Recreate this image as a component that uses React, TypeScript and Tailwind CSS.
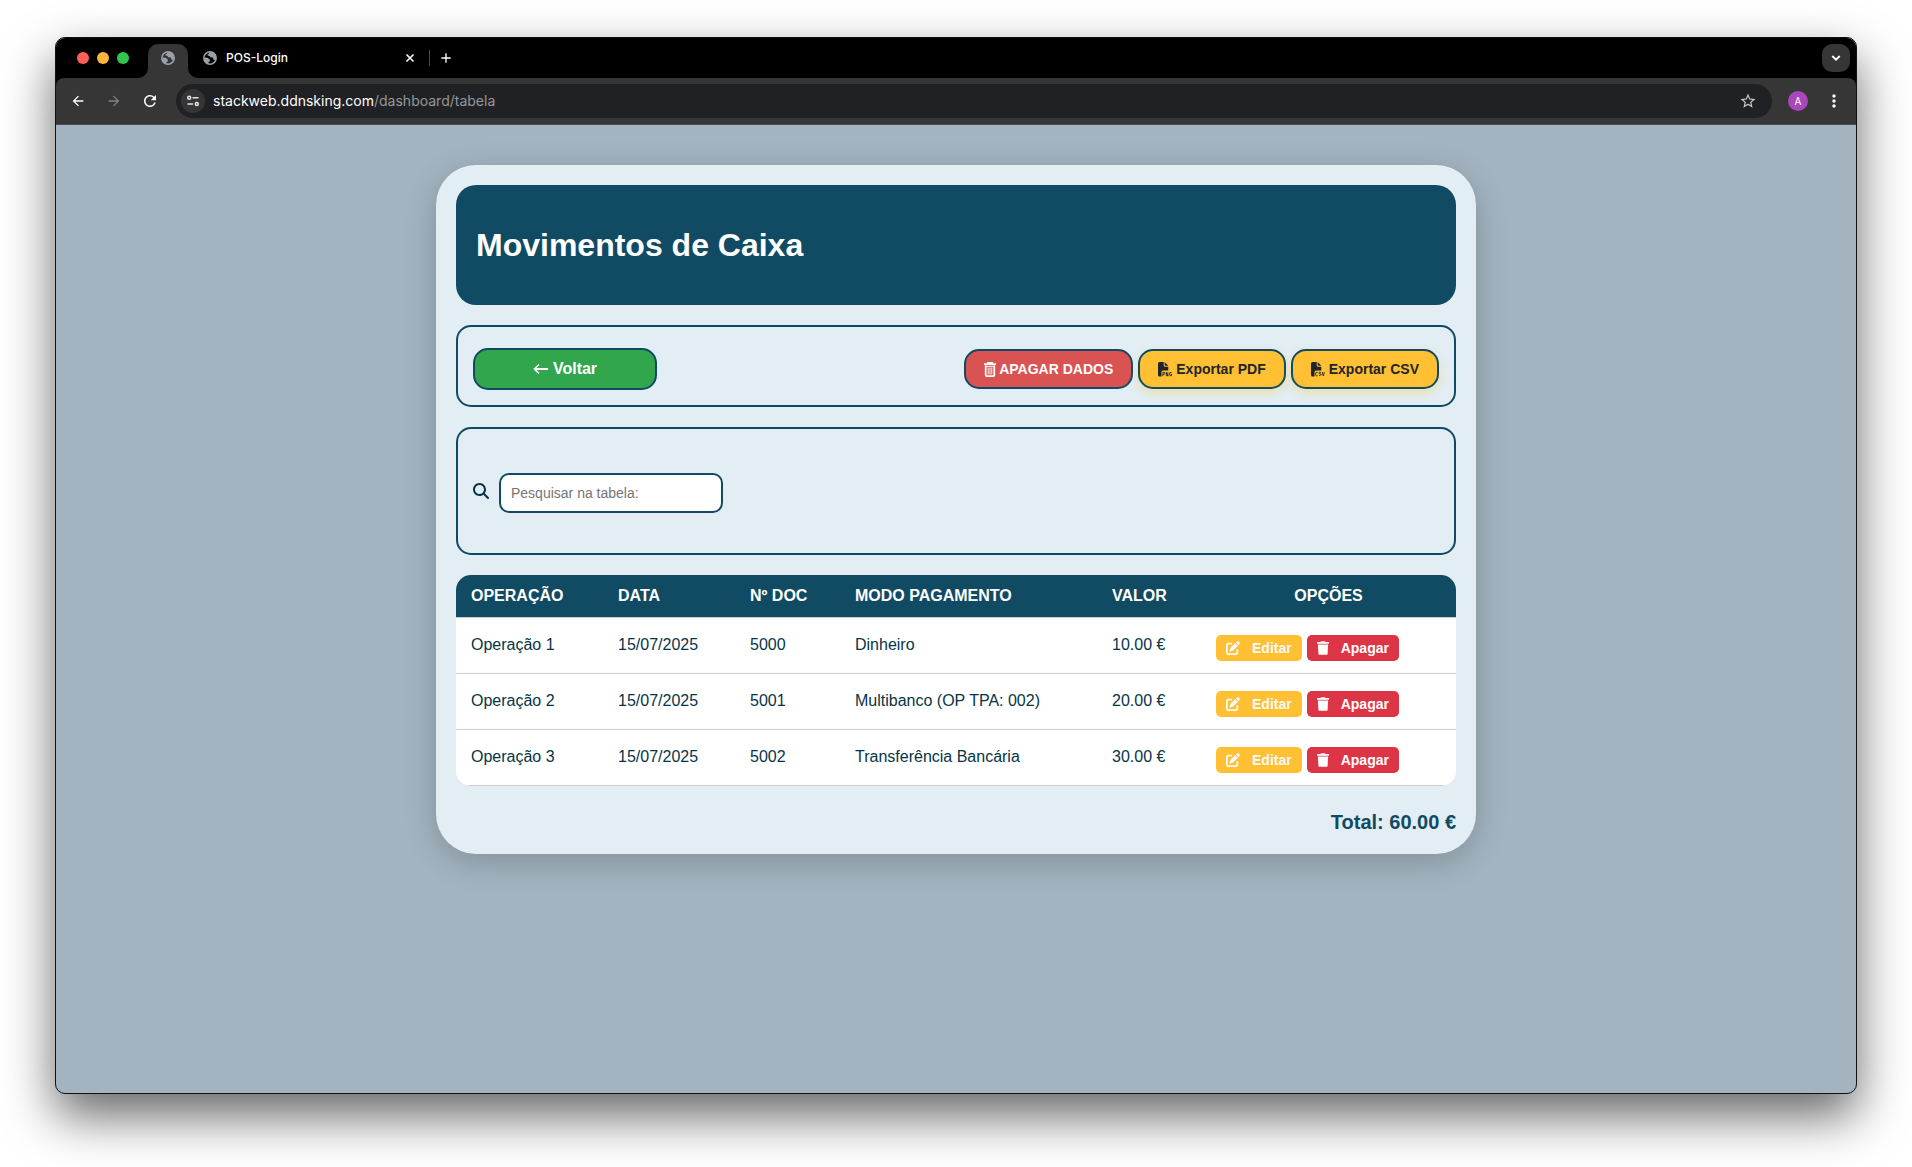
import React from "react";
import { FaTrash } from "react-icons/fa";
import { FaMagnifyingGlass, FaPenToSquare } from "react-icons/fa6";
import { BsArrowLeft } from "react-icons/bs";
import { MdArrowBack, MdArrowForward, MdRefresh, MdMoreVert, MdStarOutline, MdAdd } from "react-icons/md";

const rows = [
  { op: "Operação 1", data: "15/07/2025", doc: "5000", modo: "Dinheiro", valor: "10.00 €" },
  { op: "Operação 2", data: "15/07/2025", doc: "5001", modo: "Multibanco (OP TPA: 002)", valor: "20.00 €" },
  { op: "Operação 3", data: "15/07/2025", doc: "5002", modo: "Transferência Bancária", valor: "30.00 €" },
];

function TrashOutline() {
  return (
    <svg viewBox="0 0 12 15" className="h-[15px] w-3 shrink-0" fill="none" stroke="currentColor">
      <path d="M0 2.200h12M4 2V0.800h4V2" strokeWidth="1.800" />
      <path d="M1.700 3.500v9.500a1.200 1.200 0 0 0 1.200 1.200h6.200a1.200 1.200 0 0 0 1.200-1.200V3.500" strokeWidth="1.700" />
      <path d="M1 4.300h10" strokeWidth="1" />
      <path d="M4.200 5.500v7M6 5.500v7M7.800 5.500v7" strokeWidth="0.900" />
    </svg>
  );
}

function FileIcon({ kind }: { kind: "PNG" | "CSV" }) {
  return (
    <svg viewBox="0 0 14 16" className="h-4 w-[14px] shrink-0" fill="currentColor">
      <path d="M0 2.500A1.500 1.500 0 0 1 1.500 1H5.700v3.200A1.500 1.500 0 0 0 7.200 5.700H10.300V9.500H5A1.500 1.500 0 0 0 3.500 11V15.500h-2A1.500 1.500 0 0 1 0 14z" />
      <path d="M6.700 1l3.600 3.700H7.300a.6.6 0 0 1-.6-.6z" />
      {kind === "PNG" ? (
        <path d="M4.900 15.200v-4h.8q1.100 0 1.100 1.100t-1.100 1.100h-.8M8.300 15.200v-4l1.600 4v-4M13.500 11.700q-2-1.200-2 1.400t2 1.500v-1.400h-.7" fill="none" stroke="currentColor" strokeWidth="0.900" />
      ) : (
        <path d="M6.700 11.600q-2.100-1.300-2.100 1.500t2.100 1.500M9.900 11.500q-1.900-.9-1.900.4t1.900 1.300-1.900 1.500M11.200 11l1.100 4 1.100-4" fill="none" stroke="currentColor" strokeWidth="0.900" />
      )}
    </svg>
  );
}

function SiteControls() {
  return (
    <svg viewBox="0 0 14 12" className="h-3 w-[14px]" fill="none" stroke="#e3e3e3" strokeWidth="1.500">
      <circle cx="3.200" cy="2.800" r="1.500" />
      <path d="M6.500 2.800H12.500M1.500 9h5.500" />
      <circle cx="10.800" cy="9" r="1.500" />
    </svg>
  );
}

function Globe() {
  return (
    <svg viewBox="0 0 14 14" className="size-[14px] shrink-0" fill="none" stroke="#9aa0a9">
      <circle cx="7" cy="7" r="6.200" strokeWidth="1.500" />
      <path d="M1 6.500L4.500 6.800 6.800 8.500V10.500L5.500 11V13L2.500 12 .8 9z" fill="#9aa0a9" stroke="none" />
      <path d="M6.500 .8L6 2.500 4.500 3.200 4.600 4.600 6.500 5 7.200 6.200 9.800 6.500 10.500 8.500 12.300 9.500 13.300 7 12.500 3.500 10 1z" fill="#9aa0a9" stroke="none" />
    </svg>
  );
}

function Chrome() {
  return (
    <header className="font-[Inter,sans-serif]">
      <div className="flex h-10 items-stretch bg-black pl-[21px] pr-1.5">
        <div className="flex items-center gap-2" aria-hidden="true">
          <span className="size-3 rounded-full bg-[#ff5f57]" />
          <span className="size-3 rounded-full bg-[#ffb43f]" />
          <span className="size-3 rounded-full bg-[#32c74c]" />
        </div>
        <div className="ml-[9px] flex items-end">
          <svg viewBox="0 0 10 10" className="size-2.5" fill="#363637"><path d="M10 0v10H0A10 10 0 0 0 10 0z" /></svg>
          <button aria-label="Separador ativo" className="flex h-[34px] w-10 items-center justify-center rounded-t-[10px] bg-[#363637] pb-1.5">
            <Globe />
          </button>
          <svg viewBox="0 0 10 10" className="size-2.5" fill="#363637"><path d="M0 0v10h10A10 10 0 0 1 0 0z" /></svg>
        </div>
        <div className="ml-[5px] flex w-[214px] items-center text-white">
          <Globe />
          <span className="ml-[9px] flex-1 text-xs font-medium">POS-Login</span>
          <button aria-label="Fechar separador">
            <svg viewBox="0 0 14 14" className="size-3.5" fill="none" stroke="currentColor" strokeWidth="1.600"><path d="M3.500 3.500l7 7M10.500 3.500l-7 7" /></svg>
          </button>
        </div>
        <div className="ml-3 flex items-center">
          <span className="h-4 w-px bg-[#4a4a4c]" />
          <button aria-label="Novo separador" className="ml-2 text-white"><MdAdd className="size-4" /></button>
        </div>
        <button aria-label="Pesquisar separadores" className="ml-auto mt-1.5 flex size-7 items-center justify-center rounded-[10px] bg-[#363637] text-white">
          <svg viewBox="0 0 14 14" className="size-3.5" fill="none" stroke="currentColor" strokeWidth="1.900"><path d="M3.300 5l3.700 3.700L10.700 5" /></svg>
        </button>
      </div>
      <div className="bg-black">
        <div className="flex h-[47px] items-center rounded-t-[8px] border-b border-[#4f4a4d] bg-[#363637] pl-[14px] pr-3">
          <button aria-label="Recuar" className="text-white"><MdArrowBack className="size-4" /></button>
          <button aria-label="Avançar" className="ml-5 text-[#838384]"><MdArrowForward className="size-4" /></button>
          <button aria-label="Recarregar" className="ml-[19px] text-white"><MdRefresh className="size-[18px]" /></button>
          <div className="ml-[17px] flex h-[34px] flex-1 items-center rounded-full bg-[#202124] pl-[5px] pr-[15px]">
            <button aria-label="Informações do site" className="flex size-6 items-center justify-center rounded-full bg-[#363637]"><SiteControls /></button>
            <span className="ml-2 flex-1 text-sm text-[#96979a]"><span className="text-white">stackweb.ddnsking.com</span>/dashboard/tabela</span>
            <button aria-label="Favorito" className="text-[#c7c7c7]"><MdStarOutline className="size-[18px]" /></button>
          </div>
          <button aria-label="Perfil" className="ml-4 flex size-5 items-center justify-center rounded-full bg-[#ab47bc] text-[10px] text-white">A</button>
          <button aria-label="Menu" className="ml-4 text-white"><MdMoreVert className="size-5" /></button>
        </div>
      </div>
    </header>
  );
}

export default function App() {
  return (
    <div className="min-h-screen bg-white px-[55px] pb-[73px] pt-[37px]">
      <div className="flex min-h-[1057px] flex-col overflow-hidden rounded-[10px] border border-[#111] bg-[#a3b4c0] shadow-[0_22px_50px_rgba(0,0,0,0.6)]">
        <Chrome />
        <main className="flex-1 px-5 py-10 font-[Liberation_Sans,Arial,sans-serif] text-[#063546]">
          <div className="mx-auto max-w-[1040px] rounded-[40px] bg-[#e2edf4] p-5 shadow-[0_8px_32px_rgba(0,0,0,0.2)]">
            <div className="flex h-[120px] items-center rounded-[20px] bg-[#114b63] px-5">
              <h1 className="text-[32px] font-bold text-white">Movimentos de Caixa</h1>
            </div>

            <div className="mt-5 flex items-center justify-between rounded-[15px] border-2 border-[#114b63] px-[15px] pb-[15px] pt-[21px]">
              <button className="flex h-[42px] w-[184px] items-center justify-center gap-1 rounded-[15px] border-2 border-[#114b63] bg-[#31a64d] font-bold text-white">
                <BsArrowLeft className="size-4" stroke="currentColor" strokeWidth={1} />Voltar
              </button>
              <div className="flex gap-[5px] text-sm font-bold">
                <button className="flex h-10 items-center gap-[3px] rounded-[15px] border-2 border-[#114b63] bg-[#d95353] px-[18px] text-white"><TrashOutline />APAGAR DADOS</button>
                <button className="flex h-10 items-center gap-1 rounded-[15px] border-2 border-[#114b63] bg-[#ffc033] px-[18px] text-[#212529] shadow-[0_4px_10px_rgba(255,193,7,0.3)]"><FileIcon kind="PNG" />Exportar PDF</button>
                <button className="flex h-10 items-center gap-1 rounded-[15px] border-2 border-[#114b63] bg-[#ffc033] px-[18px] text-[#212529] shadow-[0_4px_10px_rgba(255,193,7,0.3)]"><FileIcon kind="CSV" />Exportar CSV</button>
              </div>
            </div>

            <div className="mt-5 flex h-32 items-center gap-2.5 rounded-[15px] border-2 border-[#114b63] px-[15px]">
              <label htmlFor="pesquisa" aria-label="Pesquisar na tabela"><FaMagnifyingGlass className="size-4" /></label>
              <input id="pesquisa" placeholder="Pesquisar na tabela:" className="mt-1 h-10 w-56 rounded-[10px] border-2 border-[#114b63] bg-white px-2.5 text-sm placeholder:text-[#757575]" />
            </div>

            <div className="mt-5 overflow-hidden rounded-[15px] bg-white">
              <table className="w-full table-fixed border-separate border-spacing-0 text-left">
                <colgroup>
                  <col className="w-[147px]" /><col className="w-[132px]" /><col className="w-[105px]" /><col className="w-[257px]" /><col className="w-[104px]" /><col />
                </colgroup>
                <thead className="bg-[#114b63] text-white">
                  <tr className="h-[43px] *:border-b *:border-[#ccc] *:px-[15px] *:py-0">
                    <th>OPERAÇÃO</th><th>DATA</th><th>Nº DOC</th><th>MODO PAGAMENTO</th><th>VALOR</th><th className="text-center">OPÇÕES</th>
                  </tr>
                </thead>
                <tbody>
                  {rows.map((r) => (
                    <tr key={r.doc} className="h-14 *:border-b *:border-[#ccc] *:px-[15px] *:pb-0.5">
                      <td>{r.op}</td><td>{r.data}</td><td>{r.doc}</td><td>{r.modo}</td><td>{r.valor}</td>
                      <td>
                        <div className="mt-1.5 flex gap-[5px] text-sm font-bold">
                          <button className="flex h-[26px] items-center gap-3 rounded-[5px] bg-[#ffc033] px-2.5 text-[#f8f9fa]"><FaPenToSquare className="size-3.5" />Editar</button>
                          <button className="flex h-[26px] items-center gap-3 rounded-[5px] bg-[#dc3545] px-2.5 text-white"><FaTrash className="h-3.5 w-3" />Apagar</button>
                        </div>
                      </td>
                    </tr>
                  ))}
                </tbody>
              </table>
            </div>

            <p className="mt-[22px] h-[26px] text-right text-xl font-bold text-[#114b63]">Total: 60.00 €</p>
          </div>
        </main>
      </div>
    </div>
  );
}
